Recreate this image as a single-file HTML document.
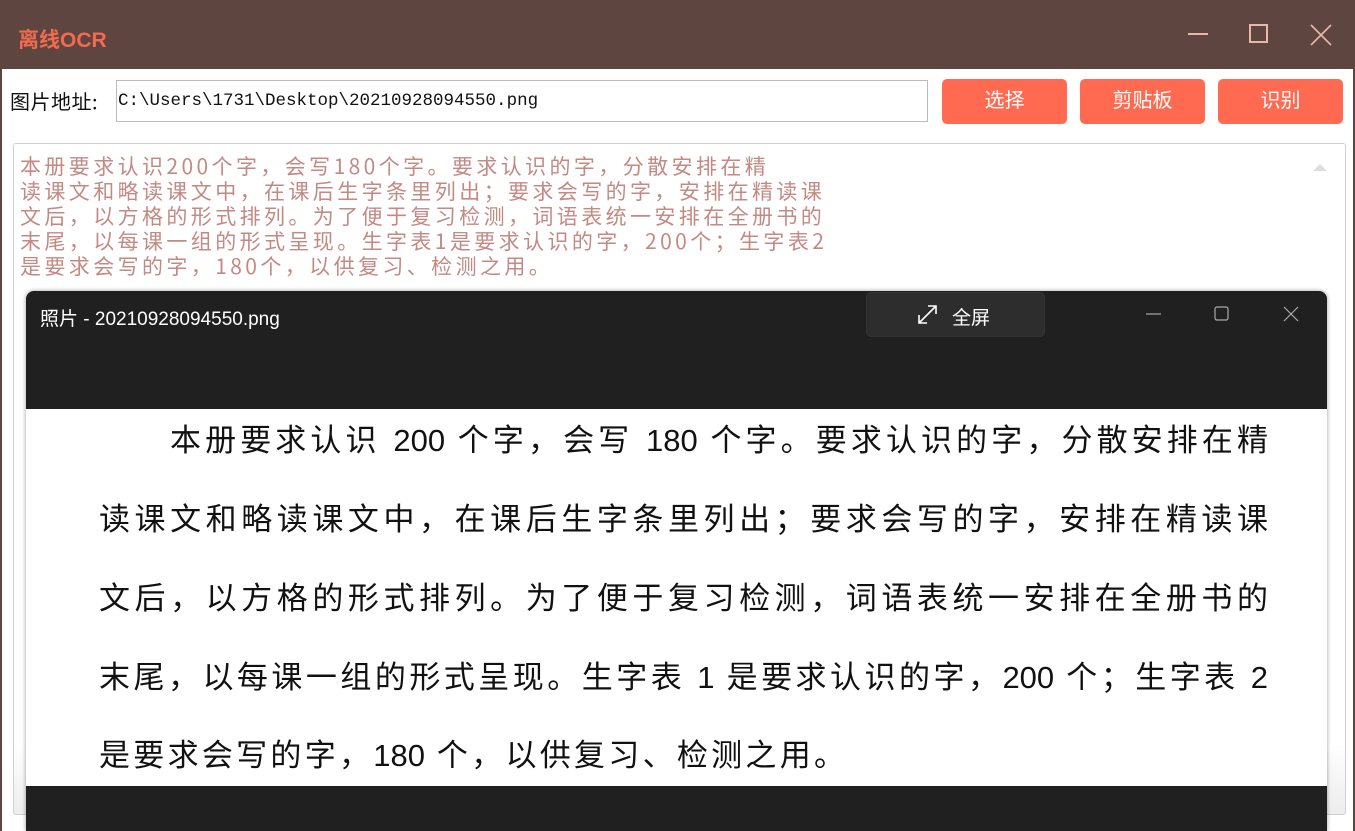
<!DOCTYPE html>
<html><head><meta charset="utf-8"><style>
*{margin:0;padding:0;box-sizing:border-box}
body{width:1355px;height:831px;overflow:hidden;background:#5f4540;position:relative;font-family:"Liberation Sans","Microsoft YaHei","Noto Sans CJK SC",sans-serif}
.abs{position:absolute}
.title{left:18px;top:24px;color:#f26a50;font-size:21px;font-weight:bold}
.main{left:2px;top:69px;width:1351px;height:762px;background:#fff}
.btn{top:79px;width:125px;height:45px;background:#ff6a51;border-radius:5px;color:#fff;font-size:20px;text-align:center;line-height:45px}
.ta{left:13px;top:143px;width:1333px;height:672px;border:1px solid #d0d0d0;border-radius:3px;background:linear-gradient(#fff 0,#fff 600px,#ececec 672px)}
.ocr{left:20px;top:154px;color:#c38a84;font-size:21px;line-height:25px;font-family:"WenQuanYi Zen Hei","Noto Sans CJK SC",sans-serif;white-space:pre;letter-spacing:3.4px}
.photo{left:26px;top:291px;width:1301px;height:540px;background:#202020;border-radius:8px 8px 0 0;box-shadow:0 0 4px rgba(0,0,0,.4)}
.img{left:26px;top:409px;width:1301px;height:377px;background:#fff}
.ln{position:absolute;left:73px;width:1169px;font-size:31px;color:#111;text-align:justify;text-align-last:justify;font-family:"Liberation Sans","Noto Sans CJK SC",sans-serif;line-height:40px;white-space:nowrap}
</style></head><body>
<div class="abs title" style="font-family:'Liberation Sans','Noto Sans CJK SC',sans-serif">离线OCR</div>
<svg class="abs" style="left:1185px;top:20px" width="150" height="30">
<line x1="3" y1="14" x2="23" y2="14" stroke="#e8b9aa" stroke-width="2"/>
<rect x="65" y="5" width="17" height="17" fill="none" stroke="#e8b9aa" stroke-width="2"/>
<line x1="126" y1="5" x2="146" y2="25" stroke="#e8b9aa" stroke-width="1.6"/>
<line x1="146" y1="5" x2="126" y2="25" stroke="#e8b9aa" stroke-width="1.6"/>
</svg>
<div class="abs main"></div>
<div class="abs" style="left:10px;top:88px;font-size:20px;color:#111;font-family:'Noto Sans CJK SC',sans-serif;line-height:26px;letter-spacing:0.5px">图片地址:</div>
<div class="abs" style="left:116px;top:80px;width:812px;height:42px;border:1px solid #bbb;font-family:'Liberation Mono',monospace;font-size:17.5px;line-height:40px;padding-left:1px;color:#111">C:\Users\1731\Desktop\20210928094550.png</div>
<div class="abs btn" style="left:942px">选择</div>
<div class="abs btn" style="left:1080px">剪贴板</div>
<div class="abs btn" style="left:1218px">识别</div>
<div class="abs ta"></div>
<div class="abs" style="left:1313px;top:164px;width:0;height:0;border-left:7px solid transparent;border-right:7px solid transparent;border-bottom:7px solid #ddd"></div>
<div class="abs ocr">本册要求认识200个字，会写180个字。要求认识的字，分散安排在精
读课文和略读课文中，在课后生字条里列出；要求会写的字，安排在精读课
文后，以方格的形式排列。为了便于复习检测，词语表统一安排在全册书的
末尾，以每课一组的形式呈现。生字表1是要求认识的字，200个；生字表2
是要求会写的字，180个，以供复习、检测之用。</div>
<div class="abs photo"></div>
<div class="abs" style="left:40px;top:304px;color:#fff;font-size:19px;font-family:'Liberation Sans','Noto Sans CJK SC',sans-serif">照片 - 20210928094550.png</div>
<div class="abs" style="left:866px;top:292px;width:179px;height:45px;background:#2d2d2d;border-radius:5px;border:1px solid #333"></div>
<svg class="abs" style="left:916px;top:303px" width="24" height="24"><path d="M3 20 L20 3 M12 3 H20 V11 M3 12 V20 H11" fill="none" stroke="#fff" stroke-width="1.6"/></svg>
<div class="abs" style="left:952px;top:303px;color:#fff;font-size:19px;font-family:'Noto Sans CJK SC',sans-serif">全屏</div>
<svg class="abs" style="left:1140px;top:303px" width="170" height="22">
<line x1="6" y1="11" x2="21" y2="11" stroke="#aaa" stroke-width="1.2"/>
<rect x="75" y="4" width="13" height="13" rx="2" fill="none" stroke="#aaa" stroke-width="1.2"/>
<line x1="144" y1="4" x2="158" y2="18" stroke="#aaa" stroke-width="1.2"/>
<line x1="158" y1="4" x2="144" y2="18" stroke="#aaa" stroke-width="1.2"/>
</svg>
<div class="abs img">
<div class="ln" style="left:144px;width:1098px;top:12px">本册要求认识 200 个字，会写 180 个字。要求认识的字，分散安排在精</div>
<div class="ln" style="top:91px">读课文和略读课文中，在课后生字条里列出；要求会写的字，安排在精读课</div>
<div class="ln" style="top:170px">文后，以方格的形式排列。为了便于复习检测，词语表统一安排在全册书的</div>
<div class="ln" style="top:249px">末尾，以每课一组的形式呈现。生字表 1 是要求认识的字，200 个；生字表 2</div>
<div class="ln" style="top:327px;width:746px">是要求会写的字，180 个，以供复习、检测之用。</div>
</div>
</body></html>
